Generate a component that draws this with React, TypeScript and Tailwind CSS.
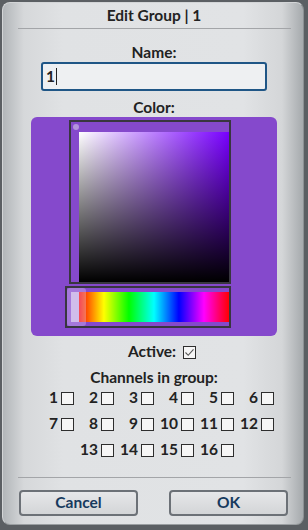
import React from "react";

const font = { fontFamily: "Lato, 'Open Sans', sans-serif" };

const rows: { start: number; nums: number[] }[] = [
  { start: 0, nums: [1, 2, 3, 4, 5, 6] },
  { start: 0, nums: [7, 8, 9, 10, 11, 12] },
  { start: 1, nums: [13, 14, 15, 16] },
];

function Box({ checked }: { checked?: boolean }) {
  return (
    <div className="w-[13px] h-[13px] border border-[#2e2e2e] bg-[#f6f6f6] flex items-center justify-center shrink-0">
      {checked && (
        <svg width="11" height="11" viewBox="0 0 11 11">
          <path d="M1.5 5.5 L4.2 8.3 L9.5 2.3" fill="none" stroke="#555" strokeWidth="1.1" />
        </svg>
      )}
    </div>
  );
}

export default function App() {
  return (
    <div className="w-[308px] h-[530px] bg-[#5b5f63] overflow-hidden" style={font}>
      <div className="ml-[2px] mt-[2px] w-[302px] h-[523px] rounded-[8px] border border-[#d3d5d7] border-r-[#8c9093] border-b-[#9a9ea1] bg-[linear-gradient(to_right,#b2b6b9_0%,#d6d8da_7%,#e0e2e4_20%,#e1e3e5_80%,#d4d6d8_93%,#a6aaad_100%)] flex flex-col text-[#222] font-bold text-[15.5px]">
        <div className="h-[25px] flex items-center justify-center pl-[2px]">Edit Group | 1</div>
        <div className="ml-[15px] mr-[12px] border-t border-[#a3a5a8]" />

        <div className="mt-[13px] h-[20px] leading-[20px] text-center pl-[2px]">Name:</div>
        <div className="ml-[38px] w-[226px] h-[29px] rounded-[3px] border-2 border-[#1f5686] bg-[#eef0f2] flex items-center pl-[3px]">
          <span className="leading-none">1</span>
          <span className="w-px h-[17px] bg-[#222] ml-[1px]" />
        </div>

        <div className="mt-[7px] h-[19px] leading-[19px] text-center pl-[2px]">Color:</div>
        <div className="ml-[28px] w-[246px] h-[219px] rounded-[6px] bg-[#8549cc] pt-[3px] flex flex-col">
          <div className="ml-[38px] w-[162px] h-[164px] border-2 border-[#38363f] relative">
            <div className="absolute left-[2px] top-[2px] w-[6px] h-[6px] rounded-full bg-[#b493dc]" />
            <div className="mt-[10px] ml-[8px] w-[150px] h-[150px] bg-[linear-gradient(to_right,#ffffff,#7800ff)]">
              <div className="w-full h-full bg-[linear-gradient(to_bottom,rgba(0,0,0,0),#000000)]" />
            </div>
          </div>
          <div className="mt-[2px] ml-[34px] w-[166px] h-[42px] border-2 border-[#38363f] relative pl-[4px] py-[4px] flex">
            <div className="w-[8px] h-full bg-[#c6b3e4]" />
            <div className="w-[150px] h-full bg-[linear-gradient(to_right,#ff0000,#ffff00_16.6%,#00ff00_33.3%,#00ffff_50%,#0000ff_66.6%,#ff00ff_83.3%,#ff0000)]" />
            <div className="absolute left-[0px] top-[0px] w-[19px] h-[38px] rounded-[3px] bg-[rgba(225,210,245,0.35)]" />
          </div>
        </div>

        <div className="mt-[6px] h-[20px] flex items-center justify-center gap-[7px] pl-[18px]">
          <span>Active:</span>
          <Box checked />
        </div>
        <div className="mt-[7px] h-[16px] leading-[16px] text-center pl-[2px]">Channels in group:</div>

        <div className="ml-[32px] flex flex-col">
          {rows.map((r, i) => (
            <div key={i} className="h-[26px] flex" style={{ marginLeft: r.start * 40 }}>
              {r.nums.map((n) => (
                <div key={n} className="w-[40px] flex items-center justify-end gap-[3px] pr-[1px]">
                  <span className="leading-none">{n}</span>
                  <Box />
                </div>
              ))}
            </div>
          ))}
        </div>

        <div className="mt-[14px] ml-[15px] mr-[12px] border-t border-[#a3a5a8]" />
        <div className="mt-[12px] ml-[16px] flex gap-[31px]">
          {["Cancel", "OK"].map((t) => (
            <div
              key={t}
              className="w-[119px] h-[26px] rounded-[4px] border-2 border-[#6c7177] bg-[linear-gradient(to_bottom,#e6e7e9,#d3d5d7)] flex items-center justify-center text-[#173a5e]"
            >
              {t}
            </div>
          ))}
        </div>
      </div>
    </div>
  );
}
